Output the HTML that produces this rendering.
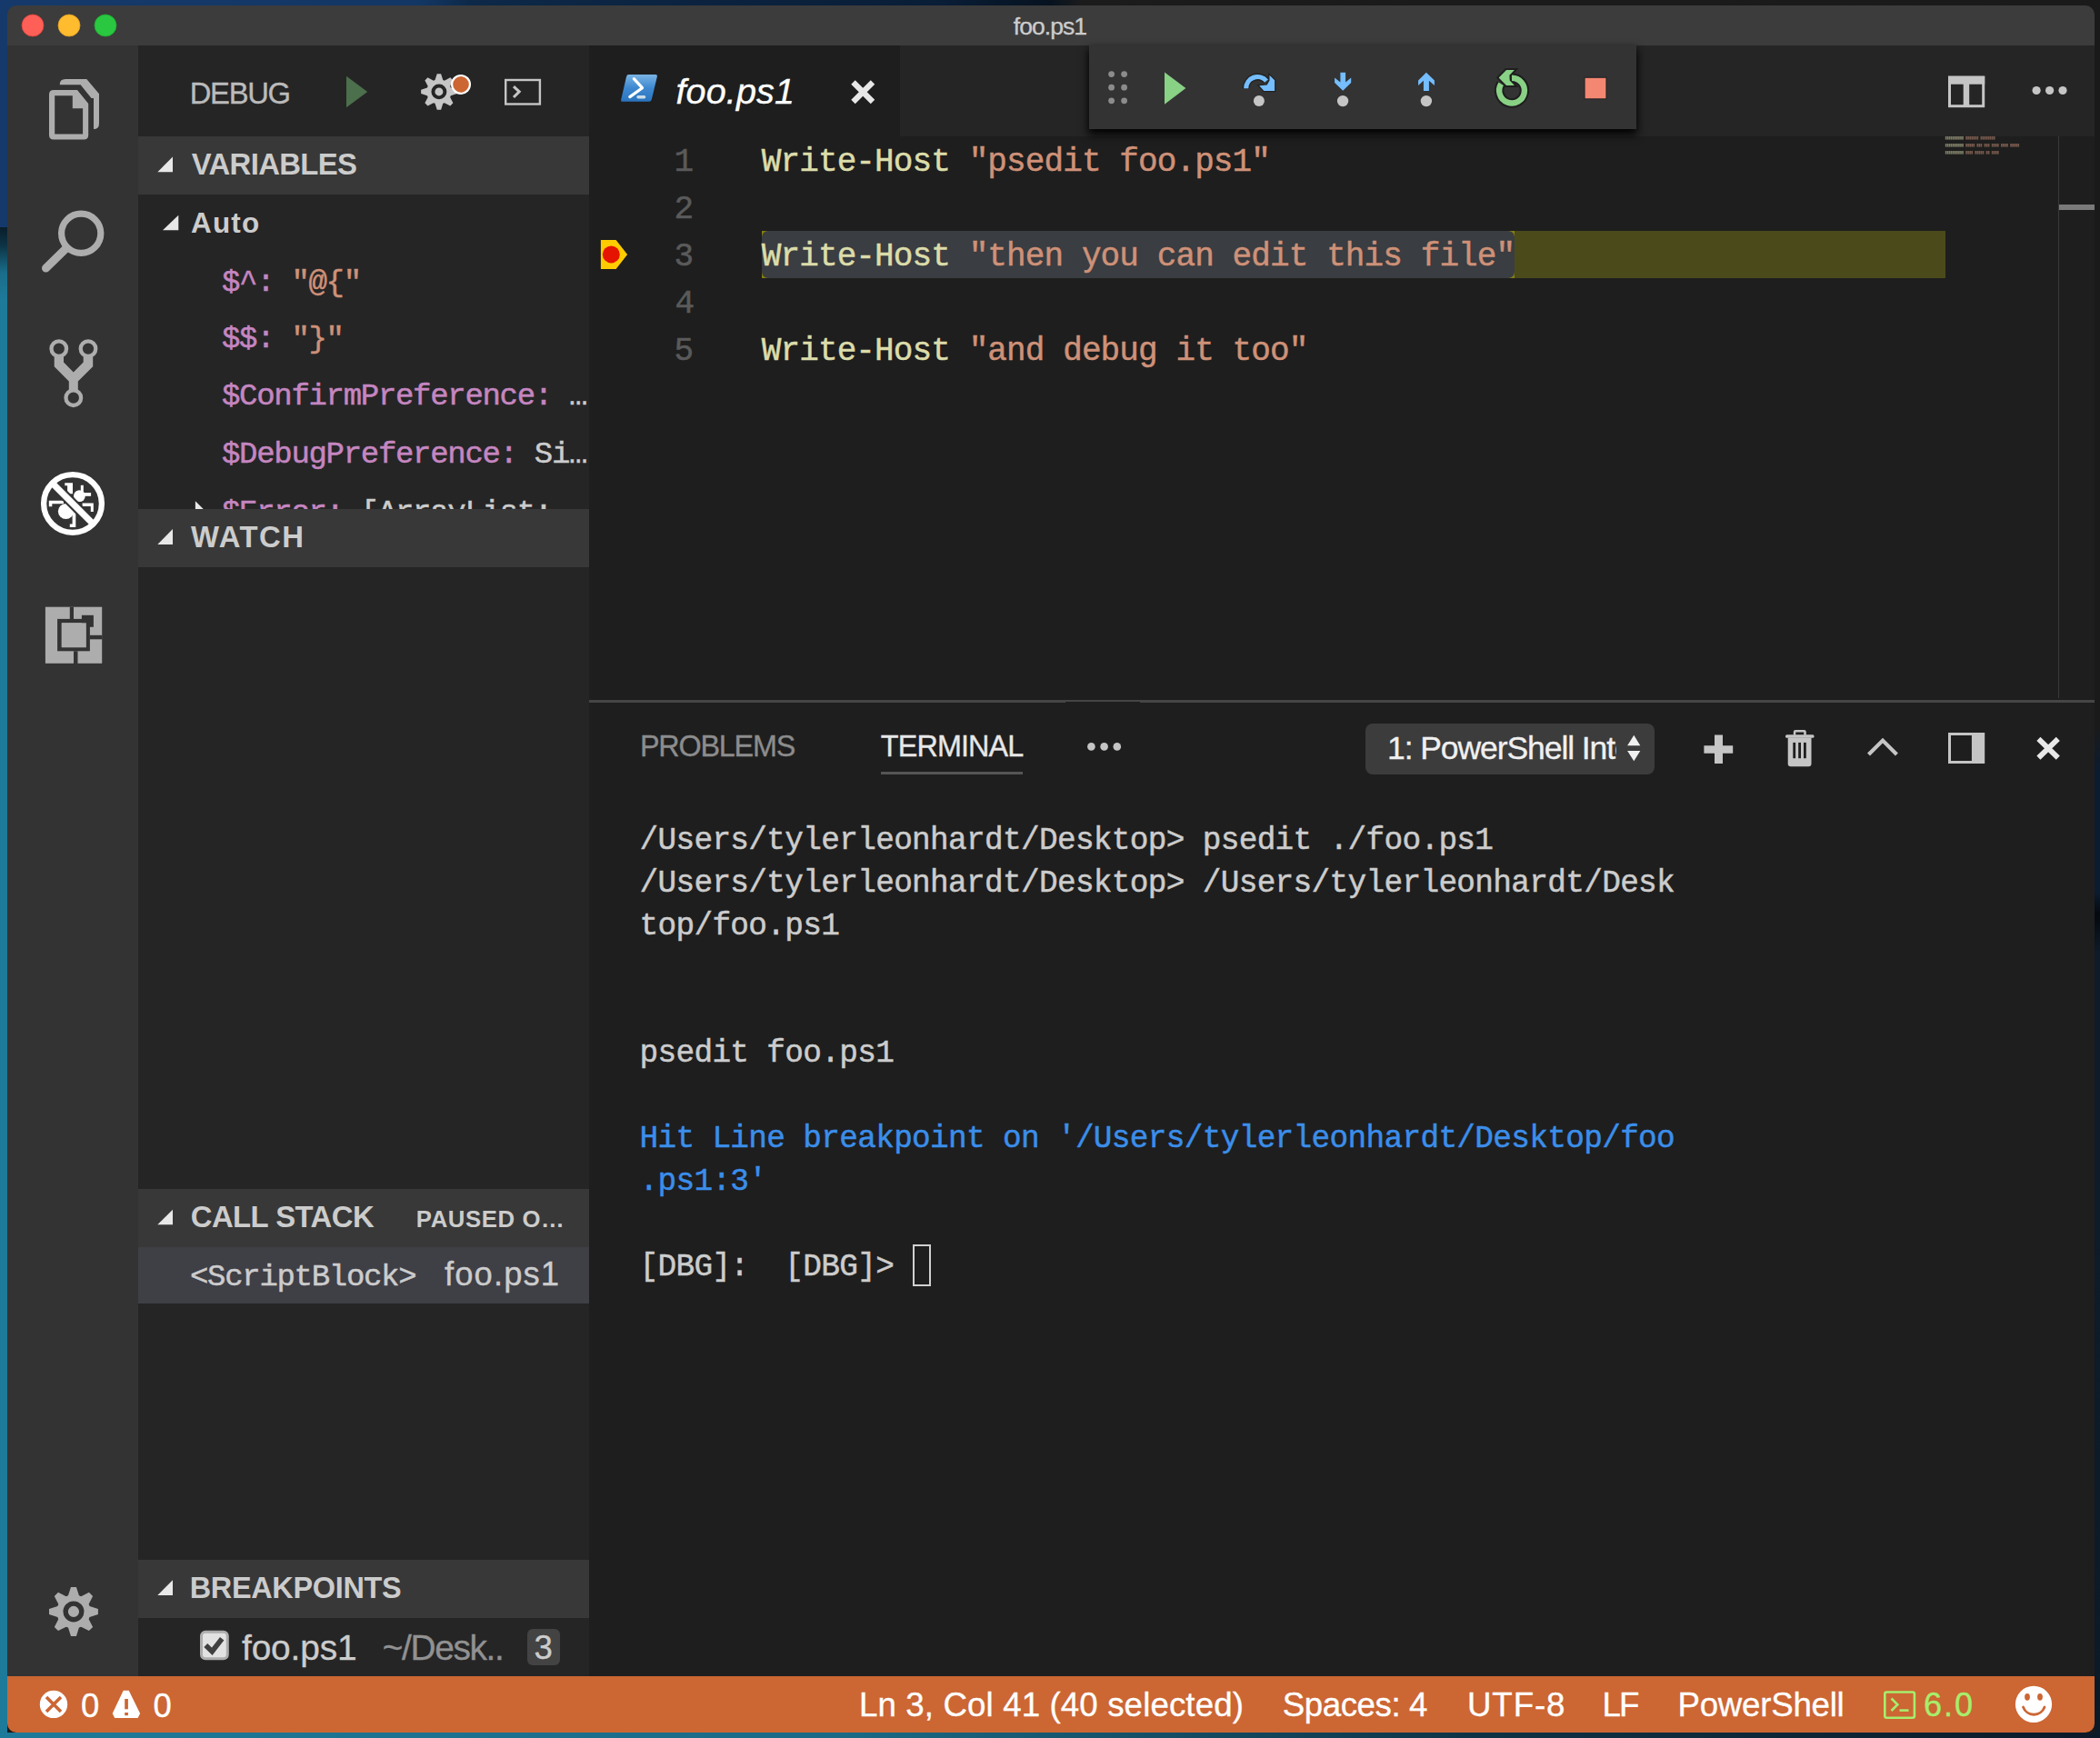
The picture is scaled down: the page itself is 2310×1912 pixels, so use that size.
<!DOCTYPE html>
<html><head><meta charset="utf-8">
<style>
*{box-sizing:border-box;margin:0;padding:0}
html,body{width:2310px;height:1912px;overflow:hidden}
body{position:relative;font-family:"Liberation Sans",sans-serif;background:#1a1a1a}
.a{position:absolute}
.bg{position:absolute}
.t{position:absolute;white-space:pre}
#deskTop{left:0;top:0;width:2310px;height:260px;background:linear-gradient(90deg,#15396a 0%,#133764 20%,#0d2848 22.5%,#091d36 45%,#06121f 50%,#1b1b1c 51.5%,#1a1a1a 100%)}
#deskL{left:0;top:250px;width:8px;height:1662px;background:linear-gradient(180deg,#0a1d2a 0px,#0d3344 20px,#1a6d8a 50px,#1e7a99 80px,#1e7a99 100%)}
#deskB{left:0;top:1906px;width:2310px;height:6px;background:linear-gradient(90deg,#1e7a99 0%,#1a6a86 40%,#0f3346 70%,#0c1a28 100%)}
#deskR{left:2304px;top:250px;width:6px;height:1662px;background:linear-gradient(180deg,#1a1a1a 0%,#1a1a1a 33%,#0c1c30 36%,#0c1c30 44%,#05090f 45.5%,#0f1b29 48%,#0c1a28 100%)}
#win{left:0;top:0;width:2310px;height:1912px;clip-path:inset(6px 6px 6px 8px round 10px)}
#ov{position:absolute;left:0;top:0}
</style></head><body>
<div id="deskTop" class="a"></div>
<div id="deskL" class="a"></div>
<div id="deskB" class="a"></div>
<div id="deskR" class="a"></div>
<div id="win" class="a">
  <div class="bg" style="left:8px;top:6px;width:2296px;height:44px;background:#3c3c3c"></div>
  <div class="bg" style="left:8px;top:50px;width:144px;height:1794px;background:#333333"></div>
  <div class="bg" style="left:152px;top:50px;width:496px;height:1794px;background:#252526"></div>
  <div class="bg" style="left:152px;top:150px;width:496px;height:64px;background:#383838"></div>
  <div class="bg" style="left:152px;top:1308px;width:496px;height:64px;background:#383838"></div>
  <div class="bg" style="left:152px;top:1372px;width:496px;height:62px;background:#3f3f46"></div>
  <div class="bg" style="left:152px;top:1716px;width:496px;height:64px;background:#383838"></div>
  <div class="bg" style="left:648px;top:50px;width:1656px;height:1794px;background:#1e1e1e"></div>
  <div class="bg" style="left:990px;top:50px;width:1314px;height:100px;background:#252526"></div>
  <!-- line 3 highlight + selection -->
  <div class="bg" style="left:838px;top:254px;width:1302px;height:52px;background:#4b4a1b"></div>
  <div class="bg" style="left:838px;top:254px;width:8px;height:52px;background:#847f10"></div>
  <div class="bg" style="left:1658px;top:254px;width:8px;height:52px;background:#847f10"></div>
  <div class="bg" style="left:838px;top:254px;width:828px;height:52px;background:#3a3d41;border-radius:7px"></div>
  <!-- ruler -->
  <div class="bg" style="left:2264px;top:150px;width:1px;height:618px;background:#3a3a3a"></div>
  <div class="bg" style="left:2265px;top:225px;width:39px;height:6px;background:#7a7a7a"></div>
  <!-- panel border -->
  <div class="bg" style="left:648px;top:770px;width:1656px;height:3px;background:#454545"></div>
  <div class="bg" style="left:1172px;top:772px;width:82px;height:1px;background:#1e1e1e"></div>
  <!-- debug toolbar -->
  <div class="bg" style="left:1198px;top:50px;width:602px;height:92px;background:#333333;box-shadow:0 5px 9px 1px rgba(0,0,0,0.95)"></div>
  <!-- terminal tab underline -->
  <div class="bg" style="left:969px;top:849px;width:156px;height:3px;background:#555555"></div>
  <!-- dropdown -->
  <div class="bg" style="left:1502px;top:796px;width:318px;height:56px;background:#3c3c3c;border-radius:8px"></div>
  <!-- badge -->
  <div class="bg" style="left:580px;top:1792px;width:36px;height:40px;background:#434343;border-radius:6px"></div>
  <!-- terminal cursor -->
  <div class="bg" style="left:1004px;top:1369px;width:20px;height:46px;border:2.5px solid #d0d0d0"></div>
  <!-- status bar -->
  <div class="bg" style="left:8px;top:1844px;width:2296px;height:62px;background:#cc6633"></div>
  <svg id="ov" width="2310" height="1912" viewBox="0 0 2310 1912"><circle cx="36" cy="28" r="12" fill="#fe5f57" stroke="#e1453f" stroke-width="0.8"/><circle cx="76" cy="28" r="12" fill="#febc2e" stroke="#dfa023" stroke-width="0.8"/><circle cx="116" cy="28" r="12" fill="#29c840" stroke="#1fa930" stroke-width="0.8"/><path fill="#adadad" fill-rule="evenodd" d="M54,104 Q54,99 59,99 L85,99 L97.2,114 L97.2,148.6 Q97.2,153.6 92.2,153.6 L59,153.6 Q54,153.6 54,148.6 Z M60.2,105.2 L79.8,105.2 L79.8,119.2 L91.1,119.2 L91.1,147.6 L60.2,147.6 Z"/><path fill="#adadad" d="M65.7,93.3 Q65.7,87 72,87 L95.3,87 L109,103.3 L109,136 Q109,142 103,142 L103,108 L100.5,108 L88.6,93.3 Z"/><circle cx="89.2" cy="256.8" r="21.6" fill="none" stroke="#adadad" stroke-width="7.2"/><line x1="72.2" y1="273.8" x2="50.5" y2="295" stroke="#adadad" stroke-width="9" stroke-linecap="round"/><circle cx="64.8" cy="383.6" r="8.3" fill="none" stroke="#adadad" stroke-width="4.3"/><circle cx="97" cy="383.6" r="8.3" fill="none" stroke="#adadad" stroke-width="4.3"/><circle cx="80.8" cy="437.7" r="8.3" fill="none" stroke="#adadad" stroke-width="4.3"/><path fill="#adadad" d="M59.7,391.5 L70,391.5 L70,398.5 L80.8,409.5 L91.7,398.5 L91.7,391.5 L102.2,391.5 L102.2,403.3 L85.8,419.5 L85.8,430 L75.8,430 L75.8,419.5 L59.7,403.3 Z"/><circle cx="72.5" cy="562.5" r="8.6" fill="#ffffff"/><path fill="#ffffff" d="M53.8,550.8 h16.2 v3.5 h-12.7 v3 h-3.5 Z"/><path fill="#ffffff" d="M79.6,563.3 h3.7 v16.6 h-6.5 v-3.3 h2.8 Z"/><circle cx="87.4" cy="545.6" r="6.4" fill="#ffffff"/><path fill="#ffffff" d="M71.3,531.3 h8.7 v12 h-5.9 v-9 h-2.8 Z"/><rect x="88.8" y="533.8" width="3" height="9" fill="#ffffff"/><rect x="91.8" y="542.1" width="8.3" height="3.7" fill="#ffffff"/><path fill="#ffffff" d="M90.6,553.6 h12.2 v9.4 h-3 v-6 h-9.2 Z"/><line x1="58.0" y1="532.0" x2="102.0" y2="576.0" stroke="#333333" stroke-width="11.5"/><line x1="57.0" y1="531.0" x2="103.0" y2="577.0" stroke="#ffffff" stroke-width="7"/><circle cx="80.0" cy="554.0" r="31.9" fill="none" stroke="#ffffff" stroke-width="6.3"/><rect x="49.9" y="667.7" width="62.3" height="62.1" fill="#adadad"/><rect x="63.1" y="680.9" width="35.8" height="35.4" fill="#333333"/><rect x="67.8" y="685.3" width="26.5" height="26.6" fill="#adadad"/><rect x="76.8" y="667.7" width="4.2" height="13.4" fill="#333333"/><rect x="89.9" y="676.8" width="13" height="13" fill="#333333"/><rect x="98.9" y="698.8" width="13.5" height="4.5" fill="#333333"/><rect x="81.0" y="716.3" width="4.5" height="13.7" fill="#333333"/><rect x="67.8" y="685.3" width="27" height="27" fill="#adadad"/><path d="M74.99,1755.34 L77.98,1746.02 L83.94,1746.02 L86.93,1755.34 L89.20,1756.28 L97.90,1751.81 L102.11,1756.02 L97.64,1764.72 L98.58,1766.99 L107.90,1769.98 L107.90,1775.94 L98.58,1778.93 L97.64,1781.20 L102.11,1789.90 L97.90,1794.11 L89.20,1789.64 L86.93,1790.58 L83.94,1799.90 L77.98,1799.90 L74.99,1790.58 L72.72,1789.64 L64.02,1794.11 L59.81,1789.90 L64.28,1781.20 L63.34,1778.93 L54.02,1775.94 L54.02,1769.98 L63.34,1766.99 L64.28,1764.72 L59.81,1756.02 L64.02,1751.81 L72.72,1756.28Z" fill="#adadad"/><circle cx="80.96" cy="1772.96" r="8.80" fill="none" stroke="#333333" stroke-width="5.40"/><path d="M381,83.8 L404.2,101 L381,118.3 Z" fill="#4c6f4c"/><path d="M478.52,87.97 L480.71,81.13 L485.09,81.13 L487.28,87.97 L488.95,88.66 L495.33,85.37 L498.43,88.47 L495.14,94.85 L495.83,96.52 L502.67,98.71 L502.67,103.09 L495.83,105.28 L495.14,106.95 L498.43,113.33 L495.33,116.43 L488.95,113.14 L487.28,113.83 L485.09,120.67 L480.71,120.67 L478.52,113.83 L476.85,113.14 L470.47,116.43 L467.37,113.33 L470.66,106.95 L469.97,105.28 L463.13,103.09 L463.13,98.71 L469.97,96.52 L470.66,94.85 L467.37,88.47 L470.47,85.37 L476.85,88.66Z" fill="#c5c5c5"/><circle cx="482.90" cy="100.90" r="6.46" fill="none" stroke="#252526" stroke-width="3.96"/><circle cx="507" cy="92.9" r="9.9" fill="#cc6633" stroke="#ffffff" stroke-width="2.2"/><rect x="556.2" y="88" width="37.7" height="26.5" fill="none" stroke="#c5c5c5" stroke-width="2.4"/><polyline points="565,95.1 571.2,100.9 565,107" fill="none" stroke="#c5c5c5" stroke-width="3"/><path d="M173.3,189.2 L190,189.2 L190,172.6 Z" fill="#e8e8e8"/><path d="M173.3,1347.3 L190,1347.3 L190,1330.7 Z" fill="#e8e8e8"/><path d="M173.3,1754.9 L190,1754.9 L190,1738.3 Z" fill="#e8e8e8"/><path d="M179,253.2 L196.3,253.2 L196.3,236.7 Z" fill="#e8e8e8"/><defs><linearGradient id="psg" x1="0" y1="0" x2="0" y2="1"><stop offset="0" stop-color="#7ab4e4"/><stop offset="0.5" stop-color="#3d88d0"/><stop offset="1" stop-color="#2a74bd"/></linearGradient></defs><path d="M691.5,82 L721,82 Q723.5,82 722.8,84.5 L716.8,109.5 Q716.2,111.8 713.8,111.8 L685,111.8 Q682.6,111.8 683.2,109.4 L689,84.4 Q689.6,82 691.5,82 Z" fill="url(#psg)"/><polyline points="697.3,86.6 706.5,96.7 692.8,106.6" fill="none" stroke="#ffffff" stroke-width="3.2" stroke-linecap="round" stroke-linejoin="round"/><line x1="702" y1="106.7" x2="708.6" y2="106.7" stroke="#c8dce8" stroke-width="3.4" stroke-linecap="round"/><path d="M938.5,90.5 L960,112 M960,90.5 L938.5,112" stroke="#e8e8e8" stroke-width="6.3"/><circle cx="1222.6" cy="81.6" r="3.4" fill="#8c8c8c"/><circle cx="1222.6" cy="96.2" r="3.4" fill="#8c8c8c"/><circle cx="1222.6" cy="110.8" r="3.4" fill="#8c8c8c"/><circle cx="1236.6" cy="81.6" r="3.4" fill="#8c8c8c"/><circle cx="1236.6" cy="96.2" r="3.4" fill="#8c8c8c"/><circle cx="1236.6" cy="110.8" r="3.4" fill="#8c8c8c"/><path d="M1281,79.6 L1304.4,97.1 L1281,114.7 Z" fill="#89d185"/><path d="M1370.7,97.2 A12.6,12.6 0 0 1 1393,89.1" fill="none" stroke="#222222" stroke-width="8"/><path d="M1396.5,82.8 L1402.1,88.2 L1402.1,100 L1390.3,100 L1385.2,94.3 L1393.7,93.5 L1396.5,88.6 Z" fill="#75beff" stroke="#222222" stroke-width="2.5" stroke-linejoin="miter"/><path d="M1370.7,97.2 A12.6,12.6 0 0 1 1393,89.1" fill="none" stroke="#75beff" stroke-width="5.2"/><path d="M1396.5,82.8 L1402.1,88.2 L1402.1,100 L1390.3,100 L1385.2,94.3 L1393.7,93.5 L1396.5,88.6 Z" fill="#75beff"/><circle cx="1384.9" cy="111" r="6" fill="#c5c5c5"/><path d="M1474.4,79.7 L1480.1,79.7 L1480.1,90.5 L1486.2,85.5 L1486.2,91 L1477.2,99.8 L1468.1,91 L1468.1,85.5 L1474.4,90.5 Z" fill="#75beff"/><circle cx="1477.1" cy="111.1" r="6.2" fill="#c5c5c5"/><path d="M1568.9,79.7 L1577.9,88.5 L1577.9,94 L1571.9,88.8 L1571.9,100 L1565.9,100 L1565.9,88.8 L1560.1,94 L1560.1,88.5 Z" fill="#75beff"/><circle cx="1568.9" cy="111.1" r="6.2" fill="#c5c5c5"/><path d="M1663,85.7 A13.9,13.9 0 1 1 1651.2,92.3" fill="none" stroke="#1e1e1e" stroke-width="10.5"/><path d="M1648.6,85.5 L1657,77 L1665.9,77 L1660.4,82.7 L1660.7,88.4 L1665.9,93.9 L1657,93.9 Z" fill="#1e1e1e" stroke="#1e1e1e" stroke-width="4" stroke-linejoin="miter"/><path d="M1663,85.7 A13.9,13.9 0 1 1 1651.2,92.3" fill="none" stroke="#89d185" stroke-width="6.4"/><path d="M1648.6,85.5 L1657,77 L1665.9,77 L1660.4,82.7 L1660.7,88.4 L1665.9,93.9 L1657,93.9 Z" fill="#89d185" stroke="none" stroke-width="0" stroke-linejoin="miter"/><rect x="1743" y="85.2" width="24" height="23.7" fill="#f48771" stroke="#262626" stroke-width="1.2"/><rect x="2144.5" y="85.2" width="37.2" height="31.5" fill="none" stroke="#c5c5c5" stroke-width="3"/><rect x="2143" y="83.7" width="40.2" height="9" fill="#c5c5c5"/><rect x="2159.7" y="86" width="6.5" height="31" fill="#c5c5c5"/><circle cx="2240.1" cy="99.5" r="4.6" fill="#c5c5c5"/><circle cx="2254.6" cy="99.5" r="4.6" fill="#c5c5c5"/><circle cx="2269" cy="99.5" r="4.6" fill="#c5c5c5"/><path d="M660.9,263.9 L677.6,263.9 L690.1,280 L677.6,296.1 L660.9,296.1 Z" fill="#ffcc00"/><circle cx="672.3" cy="279.9" r="9.5" fill="#e51400"/><circle cx="1200.4" cy="821.4" r="4.3" fill="#c5c5c5"/><circle cx="1214.6" cy="821.4" r="4.3" fill="#c5c5c5"/><circle cx="1228.8" cy="821.4" r="4.3" fill="#c5c5c5"/><path d="M1790.1,820.2 L1804.3,820.2 L1797.3,808.7 Z M1790.1,826 L1804.3,826 L1797.3,837.2 Z" fill="#f0f0f0"/><path d="M1874.4,820.2 H1906.2 V828.7 H1874.4 Z M1886,808.4 H1895 V840.1 H1886 Z" fill="#c5c5c5"/><path fill="#c5c5c5" fill-rule="evenodd" d="M1972.8,808.7 V805 Q1972.8,802.9 1975,802.9 H1984.6 Q1986.8,802.9 1986.8,805 V808.7 H1984.2 V805.5 H1975.3 V808.7 Z"/><rect x="1964" y="808.3" width="31.5" height="3.4" rx="1.5" fill="#c5c5c5"/><path fill="#c5c5c5" d="M1966.7,811.4 H1992.5 V840 Q1992.5,843.2 1989.3,843.2 H1969.9 Q1966.7,843.2 1966.7,840 Z"/><rect x="1972.3" y="816.9" width="2.8" height="17.3" fill="#1e1e1e"/><rect x="1978.2" y="816.9" width="2.8" height="17.3" fill="#1e1e1e"/><rect x="1984" y="816.9" width="2.8" height="17.3" fill="#1e1e1e"/><polyline points="2055.5,830.1 2071,814.6 2086.4,830.1" fill="none" stroke="#c5c5c5" stroke-width="4.2"/><rect x="2144.5" y="807.5" width="37.1" height="31" fill="none" stroke="#c5c5c5" stroke-width="3"/><rect x="2168.9" y="806" width="14.2" height="34" fill="#c5c5c5"/><path d="M2242.4,812.9 L2263.8,833.7 M2263.8,812.9 L2242.4,833.7" stroke="#e8e8e8" stroke-width="5.8"/><rect x="221.5" y="1795.3" width="28.8" height="29.4" rx="4.5" fill="#e2e2e2" stroke="#adadad" stroke-width="3"/><polyline points="226.3,1810 233.3,1816.8 244.2,1802.8" fill="none" stroke="#3f3f3f" stroke-width="5.6"/><circle cx="59" cy="1874.9" r="15.2" fill="#ffffff"/><path d="M51,1867 L67,1883 M67,1867 L51,1883" stroke="#cc6633" stroke-width="3.6"/><path d="M135.7,1859.7 L141.7,1859.7 L154.1,1885 L151.6,1890.1 L126.2,1890.1 L123.7,1885 Z" fill="#ffffff"/><rect x="137.2" y="1869" width="3.7" height="11.3" fill="#cc6633"/><rect x="137.2" y="1884" width="3.7" height="3.2" fill="#cc6633"/><rect x="2073.3" y="1861.5" width="32.6" height="28.2" rx="2" fill="none" stroke="#a6ee6c" stroke-width="2.6"/><polyline points="2080.5,1868.5 2087.3,1875.3 2080.5,1882" fill="none" stroke="#a6ee6c" stroke-width="2.6"/><line x1="2089.5" y1="1881.6" x2="2099.5" y2="1881.6" stroke="#a6ee6c" stroke-width="2.6"/><circle cx="2237" cy="1874.9" r="20.1" fill="#ffffff"/><ellipse cx="2230" cy="1866.8" rx="2.9" ry="3.9" fill="#cc6633"/><ellipse cx="2244" cy="1866.8" rx="2.9" ry="3.9" fill="#cc6633"/><path d="M2225.5,1878 A12.5,12.5 0 0 0 2249,1878" fill="none" stroke="#cc6633" stroke-width="2.8" stroke-linecap="round"/><rect x="2139.80" y="150" width="1.7" height="3.6" fill="#c9c9a0" opacity="0.55"/><rect x="2141.84" y="150" width="1.7" height="3.6" fill="#c9c9a0" opacity="0.55"/><rect x="2143.88" y="150" width="1.7" height="3.6" fill="#c9c9a0" opacity="0.55"/><rect x="2145.92" y="150" width="1.7" height="3.6" fill="#c9c9a0" opacity="0.55"/><rect x="2147.96" y="150" width="1.7" height="3.6" fill="#c9c9a0" opacity="0.55"/><rect x="2150.00" y="150" width="1.7" height="3.6" fill="#c9c9a0" opacity="0.55"/><rect x="2152.04" y="150" width="1.7" height="3.6" fill="#c9c9a0" opacity="0.55"/><rect x="2154.08" y="150" width="1.7" height="3.6" fill="#c9c9a0" opacity="0.55"/><rect x="2156.12" y="150" width="1.7" height="3.6" fill="#c9c9a0" opacity="0.55"/><rect x="2158.16" y="150" width="1.7" height="3.6" fill="#c9c9a0" opacity="0.55"/><rect x="2162.24" y="150" width="1.7" height="3.6" fill="#c08a72" opacity="0.55"/><rect x="2164.28" y="150" width="1.7" height="3.6" fill="#c08a72" opacity="0.55"/><rect x="2166.32" y="150" width="1.7" height="3.6" fill="#c08a72" opacity="0.55"/><rect x="2168.36" y="150" width="1.7" height="3.6" fill="#c08a72" opacity="0.55"/><rect x="2170.40" y="150" width="1.7" height="3.6" fill="#c08a72" opacity="0.55"/><rect x="2172.44" y="150" width="1.7" height="3.6" fill="#c08a72" opacity="0.55"/><rect x="2174.48" y="150" width="1.7" height="3.6" fill="#c08a72" opacity="0.55"/><rect x="2178.56" y="150" width="1.7" height="3.6" fill="#c08a72" opacity="0.55"/><rect x="2180.60" y="150" width="1.7" height="3.6" fill="#c08a72" opacity="0.55"/><rect x="2182.64" y="150" width="1.7" height="3.6" fill="#c08a72" opacity="0.55"/><rect x="2184.68" y="150" width="1.7" height="3.6" fill="#c08a72" opacity="0.55"/><rect x="2186.72" y="150" width="1.7" height="3.6" fill="#c08a72" opacity="0.55"/><rect x="2188.76" y="150" width="1.7" height="3.6" fill="#c08a72" opacity="0.55"/><rect x="2190.80" y="150" width="1.7" height="3.6" fill="#c08a72" opacity="0.55"/><rect x="2192.84" y="150" width="1.7" height="3.6" fill="#c08a72" opacity="0.55"/><rect x="2139.80" y="158" width="1.7" height="3.6" fill="#c9c9a0" opacity="0.55"/><rect x="2141.84" y="158" width="1.7" height="3.6" fill="#c9c9a0" opacity="0.55"/><rect x="2143.88" y="158" width="1.7" height="3.6" fill="#c9c9a0" opacity="0.55"/><rect x="2145.92" y="158" width="1.7" height="3.6" fill="#c9c9a0" opacity="0.55"/><rect x="2147.96" y="158" width="1.7" height="3.6" fill="#c9c9a0" opacity="0.55"/><rect x="2150.00" y="158" width="1.7" height="3.6" fill="#c9c9a0" opacity="0.55"/><rect x="2152.04" y="158" width="1.7" height="3.6" fill="#c9c9a0" opacity="0.55"/><rect x="2154.08" y="158" width="1.7" height="3.6" fill="#c9c9a0" opacity="0.55"/><rect x="2156.12" y="158" width="1.7" height="3.6" fill="#c9c9a0" opacity="0.55"/><rect x="2158.16" y="158" width="1.7" height="3.6" fill="#c9c9a0" opacity="0.55"/><rect x="2162.24" y="158" width="1.7" height="3.6" fill="#c08a72" opacity="0.55"/><rect x="2164.28" y="158" width="1.7" height="3.6" fill="#c08a72" opacity="0.55"/><rect x="2166.32" y="158" width="1.7" height="3.6" fill="#c08a72" opacity="0.55"/><rect x="2168.36" y="158" width="1.7" height="3.6" fill="#c08a72" opacity="0.55"/><rect x="2170.40" y="158" width="1.7" height="3.6" fill="#c08a72" opacity="0.55"/><rect x="2174.48" y="158" width="1.7" height="3.6" fill="#c08a72" opacity="0.55"/><rect x="2176.52" y="158" width="1.7" height="3.6" fill="#c08a72" opacity="0.55"/><rect x="2178.56" y="158" width="1.7" height="3.6" fill="#c08a72" opacity="0.55"/><rect x="2182.64" y="158" width="1.7" height="3.6" fill="#c08a72" opacity="0.55"/><rect x="2184.68" y="158" width="1.7" height="3.6" fill="#c08a72" opacity="0.55"/><rect x="2186.72" y="158" width="1.7" height="3.6" fill="#c08a72" opacity="0.55"/><rect x="2190.80" y="158" width="1.7" height="3.6" fill="#c08a72" opacity="0.55"/><rect x="2192.84" y="158" width="1.7" height="3.6" fill="#c08a72" opacity="0.55"/><rect x="2194.88" y="158" width="1.7" height="3.6" fill="#c08a72" opacity="0.55"/><rect x="2196.92" y="158" width="1.7" height="3.6" fill="#c08a72" opacity="0.55"/><rect x="2201.00" y="158" width="1.7" height="3.6" fill="#c08a72" opacity="0.55"/><rect x="2203.04" y="158" width="1.7" height="3.6" fill="#c08a72" opacity="0.55"/><rect x="2205.08" y="158" width="1.7" height="3.6" fill="#c08a72" opacity="0.55"/><rect x="2207.12" y="158" width="1.7" height="3.6" fill="#c08a72" opacity="0.55"/><rect x="2211.20" y="158" width="1.7" height="3.6" fill="#c08a72" opacity="0.55"/><rect x="2213.24" y="158" width="1.7" height="3.6" fill="#c08a72" opacity="0.55"/><rect x="2215.28" y="158" width="1.7" height="3.6" fill="#c08a72" opacity="0.55"/><rect x="2217.32" y="158" width="1.7" height="3.6" fill="#c08a72" opacity="0.55"/><rect x="2219.36" y="158" width="1.7" height="3.6" fill="#c08a72" opacity="0.55"/><rect x="2139.80" y="166" width="1.7" height="3.6" fill="#c9c9a0" opacity="0.55"/><rect x="2141.84" y="166" width="1.7" height="3.6" fill="#c9c9a0" opacity="0.55"/><rect x="2143.88" y="166" width="1.7" height="3.6" fill="#c9c9a0" opacity="0.55"/><rect x="2145.92" y="166" width="1.7" height="3.6" fill="#c9c9a0" opacity="0.55"/><rect x="2147.96" y="166" width="1.7" height="3.6" fill="#c9c9a0" opacity="0.55"/><rect x="2150.00" y="166" width="1.7" height="3.6" fill="#c9c9a0" opacity="0.55"/><rect x="2152.04" y="166" width="1.7" height="3.6" fill="#c9c9a0" opacity="0.55"/><rect x="2154.08" y="166" width="1.7" height="3.6" fill="#c9c9a0" opacity="0.55"/><rect x="2156.12" y="166" width="1.7" height="3.6" fill="#c9c9a0" opacity="0.55"/><rect x="2158.16" y="166" width="1.7" height="3.6" fill="#c9c9a0" opacity="0.55"/><rect x="2162.24" y="166" width="1.7" height="3.6" fill="#c08a72" opacity="0.55"/><rect x="2164.28" y="166" width="1.7" height="3.6" fill="#c08a72" opacity="0.55"/><rect x="2166.32" y="166" width="1.7" height="3.6" fill="#c08a72" opacity="0.55"/><rect x="2168.36" y="166" width="1.7" height="3.6" fill="#c08a72" opacity="0.55"/><rect x="2172.44" y="166" width="1.7" height="3.6" fill="#c08a72" opacity="0.55"/><rect x="2174.48" y="166" width="1.7" height="3.6" fill="#c08a72" opacity="0.55"/><rect x="2176.52" y="166" width="1.7" height="3.6" fill="#c08a72" opacity="0.55"/><rect x="2178.56" y="166" width="1.7" height="3.6" fill="#c08a72" opacity="0.55"/><rect x="2180.60" y="166" width="1.7" height="3.6" fill="#c08a72" opacity="0.55"/><rect x="2184.68" y="166" width="1.7" height="3.6" fill="#c08a72" opacity="0.55"/><rect x="2186.72" y="166" width="1.7" height="3.6" fill="#c08a72" opacity="0.55"/><rect x="2190.80" y="166" width="1.7" height="3.6" fill="#c08a72" opacity="0.55"/><rect x="2192.84" y="166" width="1.7" height="3.6" fill="#c08a72" opacity="0.55"/><rect x="2194.88" y="166" width="1.7" height="3.6" fill="#c08a72" opacity="0.55"/><rect x="2196.92" y="166" width="1.7" height="3.6" fill="#c08a72" opacity="0.55"/><path d="M214.9,551.3 L223.7,560 L214.9,568.7 Z" fill="#e8e8e8"/></svg>
  <div class="t" style="left:1114.80px;top:-21.00px;font:normal normal 26.52px/100px 'Liberation Sans';letter-spacing:-0.972px;-webkit-text-stroke:0.35px currentColor"><span style="color:#cccccc">foo.ps1</span></div>
<div class="t" style="left:208.70px;top:53.30px;font:normal normal 32.75px/100px 'Liberation Sans';letter-spacing:-1.272px;-webkit-text-stroke:0.35px currentColor"><span style="color:#bbbbbb">DEBUG</span></div>
<div class="t" style="left:210.70px;top:131.00px;font:normal bold 32.86px/100px 'Liberation Sans';letter-spacing:-0.652px"><span style="color:#cccccc">VARIABLES</span></div>
<div class="t" style="left:210.00px;top:195.70px;font:normal bold 31.43px/100px 'Liberation Sans';letter-spacing:1.217px"><span style="color:#cccccc">Auto</span></div>
<div class="t" style="left:244.00px;top:261.00px;font:normal normal 34.00px/100px 'Liberation Mono';letter-spacing:-1.303px;-webkit-text-stroke:0.50px currentColor"><span style="color:#c586c0">$^: </span><span style="color:#ce9178">&quot;@{&quot;</span></div>
<div class="t" style="left:244.00px;top:322.80px;font:normal normal 34.00px/100px 'Liberation Mono';letter-spacing:-1.303px;-webkit-text-stroke:0.50px currentColor"><span style="color:#c586c0">$$: </span><span style="color:#ce9178">&quot;}&quot;</span></div>
<div class="t" style="left:244.00px;top:386.00px;font:normal normal 34.00px/100px 'Liberation Mono';letter-spacing:-1.303px;-webkit-text-stroke:0.50px currentColor"><span style="color:#c586c0">$ConfirmPreference:</span><span style="color:#cccccc"> …</span></div>
<div class="t" style="left:244.00px;top:450.00px;font:normal normal 34.00px/100px 'Liberation Mono';letter-spacing:-1.303px;-webkit-text-stroke:0.50px currentColor"><span style="color:#c586c0">$DebugPreference:</span><span style="color:#cccccc"> Si…</span></div>
<div class="t" style="left:244.00px;top:514.00px;font:normal normal 34.00px/100px 'Liberation Mono';letter-spacing:-1.303px;-webkit-text-stroke:0.50px currentColor"><span style="color:#c586c0">$Error:</span><span style="color:#cccccc"> [ArrayList:</span></div>
<div class="t" style="left:209.70px;top:1289.00px;font:normal bold 32.86px/100px 'Liberation Sans';letter-spacing:-0.538px"><span style="color:#cccccc">CALL STACK</span></div>
<div class="t" style="left:457.80px;top:1291.00px;font:normal bold 25.71px/100px 'Liberation Sans';letter-spacing:0.607px"><span style="color:#cccccc">PAUSED O…</span></div>
<div class="t" style="left:209.00px;top:1355.40px;font:normal normal 34.00px/100px 'Liberation Mono';letter-spacing:-1.303px;-webkit-text-stroke:0.50px currentColor"><span style="color:#cccccc">&lt;ScriptBlock&gt;</span></div>
<div class="t" style="left:489.00px;top:1352.40px;font:normal normal 36.38px/100px 'Liberation Sans';letter-spacing:1.118px;-webkit-text-stroke:0.35px currentColor"><span style="color:#cccccc">foo.ps1</span></div>
<div class="t" style="left:208.70px;top:1696.70px;font:normal bold 32.43px/100px 'Liberation Sans';letter-spacing:-0.305px"><span style="color:#cccccc">BREAKPOINTS</span></div>
<div class="t" style="left:266.00px;top:1763.10px;font:normal normal 38.84px/100px 'Liberation Sans';letter-spacing:-0.129px;-webkit-text-stroke:0.35px currentColor"><span style="color:#cccccc">foo.ps1</span></div>
<div class="t" style="left:420.70px;top:1763.10px;font:normal normal 38.84px/100px 'Liberation Sans';letter-spacing:-1.345px;-webkit-text-stroke:0.35px currentColor"><span style="color:#919191">~/Desk..</span></div>
<div class="t" style="left:587.60px;top:1762.90px;font:normal normal 36.57px/100px 'Liberation Sans';letter-spacing:0.000px;-webkit-text-stroke:0.35px currentColor"><span style="color:#cccccc">3</span></div>
<div class="t" style="left:743.50px;top:49.80px;font:italic normal 39.57px/100px 'Liberation Sans';letter-spacing:0.121px;-webkit-text-stroke:0.35px currentColor"><span style="color:#ffffff">foo.ps1</span></div>
<div class="t" style="left:741.50px;top:129.00px;font:normal normal 36.00px/100px 'Liberation Mono';letter-spacing:-0.893px;-webkit-text-stroke:0.50px currentColor"><span style="color:#5a5a5a">1</span></div>
<div class="t" style="left:741.50px;top:181.00px;font:normal normal 36.00px/100px 'Liberation Mono';letter-spacing:-0.893px;-webkit-text-stroke:0.50px currentColor"><span style="color:#5a5a5a">2</span></div>
<div class="t" style="left:741.50px;top:233.00px;font:normal normal 36.00px/100px 'Liberation Mono';letter-spacing:-0.893px;-webkit-text-stroke:0.50px currentColor"><span style="color:#5a5a5a">3</span></div>
<div class="t" style="left:742.50px;top:285.00px;font:normal normal 36.00px/100px 'Liberation Mono';letter-spacing:-0.893px;-webkit-text-stroke:0.50px currentColor"><span style="color:#5a5a5a">4</span></div>
<div class="t" style="left:741.50px;top:337.00px;font:normal normal 36.00px/100px 'Liberation Mono';letter-spacing:-0.893px;-webkit-text-stroke:0.50px currentColor"><span style="color:#5a5a5a">5</span></div>
<div class="t" style="left:837.80px;top:129.00px;font:normal normal 36.00px/100px 'Liberation Mono';letter-spacing:-0.893px;-webkit-text-stroke:0.50px currentColor"><span style="color:#dcdcaa">Write-Host </span><span style="color:#ce9178">&quot;psedit foo.ps1&quot;</span></div>
<div class="t" style="left:837.80px;top:233.00px;font:normal normal 36.00px/100px 'Liberation Mono';letter-spacing:-0.893px;-webkit-text-stroke:0.50px currentColor"><span style="color:#dcdcaa">Write-Host </span><span style="color:#ce9178">&quot;then you can edit this file&quot;</span></div>
<div class="t" style="left:837.80px;top:337.00px;font:normal normal 36.00px/100px 'Liberation Mono';letter-spacing:-0.893px;-webkit-text-stroke:0.50px currentColor"><span style="color:#dcdcaa">Write-Host </span><span style="color:#ce9178">&quot;and debug it too&quot;</span></div>
<div class="t" style="left:704.00px;top:771.00px;font:normal normal 32.32px/100px 'Liberation Sans';letter-spacing:-1.188px;-webkit-text-stroke:0.35px currentColor"><span style="color:#8c8c8c">PROBLEMS</span></div>
<div class="t" style="left:968.80px;top:771.00px;font:normal normal 32.32px/100px 'Liberation Sans';letter-spacing:-0.844px;-webkit-text-stroke:0.35px currentColor"><span style="color:#e7e7e7">TERMINAL</span></div>
<div class="t" style="left:1526.00px;top:773.20px;font:normal normal 35.51px/100px 'Liberation Sans';letter-spacing:-1.080px;-webkit-text-stroke:0.35px currentColor;width:252.0px;overflow:hidden"><span style="color:#f0f0f0">1: PowerShell Inte</span></div>
<div class="t" style="left:703.50px;top:875.20px;font:normal normal 34.40px/100px 'Liberation Mono';letter-spacing:-0.663px;-webkit-text-stroke:0.50px currentColor"><span style="color:#cccccc">/Users/tylerleonhardt/Desktop&gt; psedit ./foo.ps1</span></div>
<div class="t" style="left:703.50px;top:922.05px;font:normal normal 34.40px/100px 'Liberation Mono';letter-spacing:-0.663px;-webkit-text-stroke:0.50px currentColor"><span style="color:#cccccc">/Users/tylerleonhardt/Desktop&gt; /Users/tylerleonhardt/Desk</span></div>
<div class="t" style="left:703.50px;top:968.90px;font:normal normal 34.40px/100px 'Liberation Mono';letter-spacing:-0.663px;-webkit-text-stroke:0.50px currentColor"><span style="color:#cccccc">top/foo.ps1</span></div>
<div class="t" style="left:703.50px;top:1109.45px;font:normal normal 34.40px/100px 'Liberation Mono';letter-spacing:-0.663px;-webkit-text-stroke:0.50px currentColor"><span style="color:#cccccc">psedit foo.ps1</span></div>
<div class="t" style="left:703.50px;top:1203.15px;font:normal normal 34.40px/100px 'Liberation Mono';letter-spacing:-0.663px;-webkit-text-stroke:0.50px currentColor"><span style="color:#3b8eea">Hit Line breakpoint on &#x27;/Users/tylerleonhardt/Desktop/foo</span></div>
<div class="t" style="left:703.50px;top:1250.00px;font:normal normal 34.40px/100px 'Liberation Mono';letter-spacing:-0.663px;-webkit-text-stroke:0.50px currentColor"><span style="color:#3b8eea">.ps1:3&#x27;</span></div>
<div class="t" style="left:703.50px;top:1343.70px;font:normal normal 34.40px/100px 'Liberation Mono';letter-spacing:-0.663px;-webkit-text-stroke:0.50px currentColor"><span style="color:#cccccc">[DBG]:  [DBG]&gt; </span></div>
<div class="t" style="left:89.10px;top:1826.90px;font:normal normal 36.50px/100px 'Liberation Sans';letter-spacing:0.000px;-webkit-text-stroke:0.35px currentColor"><span style="color:#ffffff">0</span></div>
<div class="t" style="left:168.60px;top:1826.90px;font:normal normal 36.50px/100px 'Liberation Sans';letter-spacing:0.000px;-webkit-text-stroke:0.35px currentColor"><span style="color:#ffffff">0</span></div>
<div class="t" style="left:945.00px;top:1826.30px;font:normal normal 36.67px/100px 'Liberation Sans';letter-spacing:0.126px;-webkit-text-stroke:0.35px currentColor"><span style="color:#ffffff">Ln 3, Col 41 (40 selected)</span></div>
<div class="t" style="left:1410.70px;top:1826.30px;font:normal normal 36.67px/100px 'Liberation Sans';letter-spacing:-0.417px;-webkit-text-stroke:0.35px currentColor"><span style="color:#ffffff">Spaces: 4</span></div>
<div class="t" style="left:1614.00px;top:1826.30px;font:normal normal 36.67px/100px 'Liberation Sans';letter-spacing:0.885px;-webkit-text-stroke:0.35px currentColor"><span style="color:#ffffff">UTF-8</span></div>
<div class="t" style="left:1762.60px;top:1826.30px;font:normal normal 36.67px/100px 'Liberation Sans';letter-spacing:-1.986px;-webkit-text-stroke:0.35px currentColor"><span style="color:#ffffff">LF</span></div>
<div class="t" style="left:1845.50px;top:1826.30px;font:normal normal 36.67px/100px 'Liberation Sans';letter-spacing:-0.241px;-webkit-text-stroke:0.35px currentColor"><span style="color:#ffffff">PowerShell</span></div>
<div class="t" style="left:2116.00px;top:1826.30px;font:normal normal 36.14px/100px 'Liberation Sans';letter-spacing:1.936px;-webkit-text-stroke:0.35px currentColor"><span style="color:#a6ee6c">6.0</span></div>
  <!-- watch header drawn after texts to clip $Error row -->
  <div class="bg" style="left:152px;top:560px;width:496px;height:64px;background:#383838"></div>
  <svg class="a" style="left:0;top:0" width="2310" height="1912" viewBox="0 0 2310 1912"><path d="M173.3,599 L190,599 L190,582.1 Z" fill="#e8e8e8"/></svg>
  <div class="t" style="left:210.00px;top:541.00px;font:normal bold 32.86px/100px 'Liberation Sans';letter-spacing:1.501px"><span style="color:#cccccc">WATCH</span></div>
</div>
</body></html>
